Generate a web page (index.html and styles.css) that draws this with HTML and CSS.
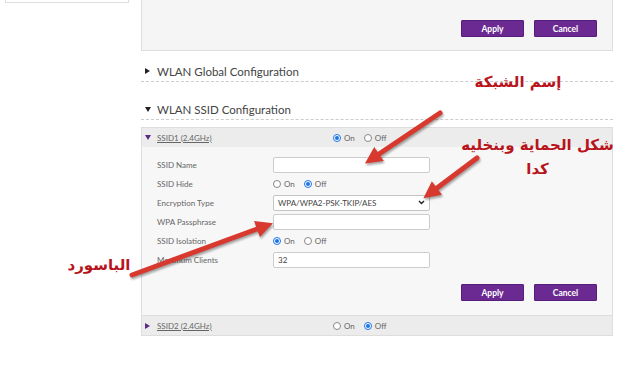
FILE: index.html
```html
<!DOCTYPE html>
<html>
  <head>
    <meta charset="utf-8">
    <title>WLAN SSID Configuration</title>
    <link rel="stylesheet" href="styles.css">
  </head>
  <body>
    <div class="page">
      <div class="aside">
        <div class="nav-box"></div>
      </div>

      <div class="main">
        <div class="top-panel">
          <div class="actions">
            <button class="btn">Apply</button>
            <button class="btn">Cancel</button>
          </div>
        </div>

        <div class="section-title first"><span class="caret right"></span>WLAN Global Configuration</div>
        <div class="section-title"><span class="caret down"></span>WLAN SSID Configuration</div>

        <div class="ssid-panel">
          <div class="ssid-head">
            <span class="caret down purple"></span>
            <span class="ssid-name">SSID1 (2.4GHz)</span>
            <span class="radios">
              <span class="radio checked"></span><span class="radio-text">On</span>
              <span class="radio"></span><span class="radio-text">Off</span>
            </span>
          </div>

          <div class="ssid-body">
            <div class="row">
              <span class="label">SSID Name</span>
              <div class="field"></div>
            </div>
            <div class="row">
              <span class="label">SSID Hide</span>
              <span class="radios">
                <span class="radio"></span><span class="radio-text">On</span>
                <span class="radio checked"></span><span class="radio-text">Off</span>
              </span>
            </div>
            <div class="row">
              <span class="label">Encryption Type</span>
              <div class="field select">
                <span>WPA/WPA2-PSK-TKIP/AES</span>
                <svg width="7" height="5" viewBox="0 0 7 5"><path d="M1 1 L3.5 3.5 L6 1" fill="none" stroke="#222" stroke-width="1.4"/></svg>
              </div>
            </div>
            <div class="row">
              <span class="label">WPA Passphrase</span>
              <div class="field"></div>
            </div>
            <div class="row">
              <span class="label">SSID Isolation</span>
              <span class="radios">
                <span class="radio checked"></span><span class="radio-text">On</span>
                <span class="radio"></span><span class="radio-text">Off</span>
              </span>
            </div>
            <div class="row">
              <span class="label">Maximum Clients</span>
              <div class="field">32</div>
            </div>

            <div class="actions body-actions">
              <button class="btn">Apply</button>
              <button class="btn">Cancel</button>
            </div>
          </div>

          <div class="ssid-head closed">
            <span class="caret right purple"></span>
            <span class="ssid-name">SSID2 (2.4GHz)</span>
            <span class="radios">
              <span class="radio"></span><span class="radio-text">On</span>
              <span class="radio checked"></span><span class="radio-text">Off</span>
            </span>
          </div>
        </div>
      </div>

      <!-- annotations over the screenshot -->
      <svg class="arrows" width="625" height="375" viewBox="0 0 625 375">
        <defs>
          <marker id="head" viewBox="0 0 10 10" refX="0" refY="5" markerWidth="3.6" markerHeight="3.4" orient="auto">
            <path d="M0 0 L10 5 L0 10 z" fill="#d8392e"/>
          </marker>
        </defs>
        <line x1="440" y1="113" x2="379" y2="154" stroke="#d8392e" stroke-width="5" stroke-linecap="round" marker-end="url(#head)"/>
        <line x1="477" y1="158" x2="437" y2="188" stroke="#d8392e" stroke-width="5" stroke-linecap="round" marker-end="url(#head)"/>
        <line x1="132" y1="275" x2="257" y2="229" stroke="#d8392e" stroke-width="5" stroke-linecap="round" marker-end="url(#head)"/>
      </svg>

      <div class="note note-name">إسم الشبكة</div>
      <div class="note note-enc">شكل الحماية وبنخليه<br>كدا</div>
      <div class="note note-pass">الباسورد</div>
    </div>
  </body>
</html>
```

FILE: styles.css
```css
* {
  margin: 0;
  box-sizing: border-box;
}

body {
  font-family: Lato, "Open Sans", sans-serif;
  background-color: #fff;
}

.page {
  position: relative;
  display: flex;
  height: 375px;
  padding-left: 5px;
}

.aside {
  width: 124px;
}

.nav-box {
  height: 3px;
  border: 1px solid #ddd;
  border-top: none;
  background-color: #fff;
}

.main {
  width: 472px;
  margin-left: 12px;
}

.top-panel {
  background-color: #f5f5f5;
  border: 1px solid #ddd;
  border-top: none;
  padding: 20px 15px 13px;
}

.actions {
  display: flex;
  justify-content: flex-end;
  gap: 10px;
}

.btn {
  width: 63px;
  height: 17px;
  padding: 0;
  border: 1px solid #561d7a;
  border-radius: 1px;
  background-color: #6b2a91;
  color: #fff;
  font-family: inherit;
  font-size: 8.5px;
  font-weight: bold;
}

.section-title {
  display: flex;
  align-items: center;
  height: 21px;
  margin-top: 17px;
  padding-left: 4px;
  border-bottom: 1px dashed #ccc;
  color: #444;
  font-size: 11.5px;
}

.section-title.first {
  margin-top: 10px;
}

.caret {
  width: 0;
  height: 0;
  margin-right: 7px;
}

.caret.right {
  border-top: 3px solid transparent;
  border-bottom: 3px solid transparent;
  border-left: 5px solid #222;
}

.caret.down {
  border-left: 3px solid transparent;
  border-right: 3px solid transparent;
  border-top: 5px solid #222;
  margin-right: 6px;
}

.caret.right.purple {
  border-left-color: #5b2a86;
}

.caret.down.purple {
  border-top-color: #5b2a86;
}

.ssid-panel {
  margin-top: 7px;
  border: 1px solid #ddd;
}

.ssid-head {
  display: flex;
  align-items: center;
  height: 19px;
  padding-left: 3px;
  background-color: #ececec;
  font-size: 8px;
}

.ssid-head.closed {
  border-top: 1px solid #ddd;
  height: 20px;
}

.ssid-name {
  width: 176px;
  color: #666;
  text-decoration: underline;
}

.radios {
  display: flex;
  align-items: center;
  color: #666;
  font-size: 8px;
}

.radio {
  position: relative;
  width: 8px;
  height: 8px;
  margin-right: 3px;
  border: 1px solid #888;
  border-radius: 50%;
  background-color: #fff;
}

.radio.checked {
  border-color: #1a73e8;
}

.radio.checked::after {
  content: "";
  position: absolute;
  top: 1px;
  left: 1px;
  width: 4px;
  height: 4px;
  border-radius: 50%;
  background-color: #1a73e8;
}

.radio-text {
  margin-right: 9px;
}

.ssid-body {
  padding: 8px 15px 14px;
  background-color: #f7f7f7;
}

.row {
  display: flex;
  align-items: center;
  height: 19px;
}

.label {
  width: 116px;
  color: #666;
  font-size: 8px;
}

.field {
  display: flex;
  align-items: center;
  justify-content: space-between;
  width: 157px;
  height: 16px;
  padding: 0 4px;
  border: 1px solid #ccc;
  border-radius: 2px;
  background-color: #fff;
  color: #444;
  font-size: 8px;
}

.field.select {
  border-color: #c4c4c4;
}

.body-actions {
  margin-top: 15px;
}

.arrows {
  position: absolute;
  top: 0;
  left: 0;
  filter: drop-shadow(1px 2px 1px rgba(0, 0, 0, 0.35));
}

.note {
  position: absolute;
  color: #b8141c;
  font-family: "DejaVu Sans", sans-serif;
  font-weight: bold;
  font-size: 15px;
  line-height: 24px;
  text-align: center;
  direction: rtl;
}

.note-name {
  top: 70px;
  left: 468px;
  width: 100px;
}

.note-enc {
  top: 133px;
  left: 455px;
  width: 165px;
}

.note-pass {
  top: 253px;
  left: 49px;
  width: 100px;
}
```
